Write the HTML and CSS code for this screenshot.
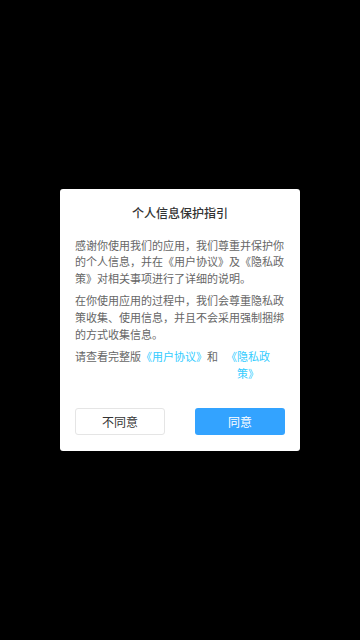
FILE: index.html
```html
<!DOCTYPE html>
<html lang="zh-CN">
<head>
  <meta charset="UTF-8">
  <title>个人信息保护指引</title>
  <link rel="stylesheet" href="styles.css">
</head>
<body>
  <!-- 隐私弹窗 -->
  <div class="dialog">
    <div class="dialog-title">个人信息保护指引</div>
    <div class="dialog-body">
      <p>感谢你使用我们的应用，我们尊重并保护你的个人信息，并在《用户协议》及《隐私政策》对相关事项进行了详细的说明。</p>
      <p>在你使用应用的过程中，我们会尊重隐私政策收集、使用信息，并且不会采用强制捆绑的方式收集信息。</p>
      <div class="links">
        <span>请查看完整版</span>
        <a class="link">《用户协议》</a>
        <span>和</span>
        <a class="link link-last">《隐私政策》</a>
      </div>
    </div>
    <div class="dialog-buttons">
      <button class="btn btn-cancel">不同意</button>
      <button class="btn btn-ok">同意</button>
    </div>
  </div>
</body>
</html>
```

FILE: styles.css
```css
body {
  margin: 0;
  font-family: "Noto Sans CJK SC", "Noto Sans", sans-serif;
  background: #000;
  display: flex;
  align-items: center;
  justify-content: center;
  height: 100vh;
  overflow: hidden;
}

.dialog {
  width: 240px;
  background: #fff;
  border-radius: 3px;
  padding: 15px 0 16px;
  box-sizing: border-box;
}

.dialog-title {
  font-size: 12px;
  line-height: 17px;
  font-weight: 500;
  color: #333;
  text-align: center;
}

.dialog-body {
  margin-top: 16px;
  padding: 0 15px;
  font-size: 11px;
  line-height: 16.7px;
  color: #666;
}

.dialog-body p {
  margin: 0 0 5.5px;
}

.links {
  display: flex;
  align-items: flex-start;
}

.link {
  color: #33ccff;
  white-space: nowrap;
}

.link-last {
  width: 44px;
  margin-left: 8px;
  white-space: normal;
  text-align: center;
}

.dialog-buttons {
  display: flex;
  justify-content: space-between;
  padding: 0 15px;
  margin-top: 27px;
}

.btn {
  width: 90px;
  height: 27px;
  font-family: inherit;
  font-size: 12px;
  border-radius: 3px;
  cursor: pointer;
  padding: 0;
}

.btn-cancel {
  background: #fff;
  color: #333;
  border: 1px solid #e5e5e5;
}

.btn-ok {
  background: #33a3ff;
  color: #fff;
  border: none;
}
```
